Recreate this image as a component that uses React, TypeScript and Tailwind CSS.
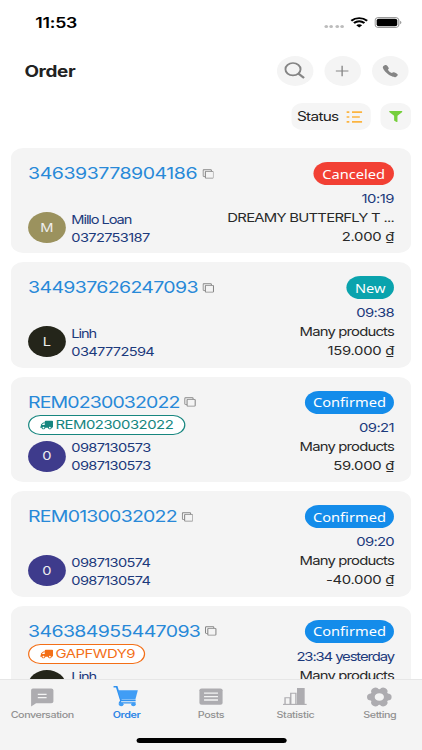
import type { ReactNode } from 'react'
import { FaFilter, FaTruck } from 'react-icons/fa'
import { IoCall } from 'react-icons/io5'

type Order = {
    id: string
    name: string
    phone: string
    initial: string
    avatar: string
    status: string
    statusClass: string
    time: string
    product: string
    price: string
    shipping?: string
    shippingClass?: string
    idClass: string
    timeClass: string
    productClass: string
}

const orders: Order[] = [
    {
        id: '346393778904186', name: 'Millo Loan', phone: '0372753187', initial: 'M', avatar: 'bg-[#9b925e]',
        status: 'Canceled', statusClass: 'bg-[#f24034] w-[66px]', time: '10:19', product: 'DREAMY BUTTERFLY T ...', price: '2.000 ₫',
        idClass: 'tracking-[-0.38px]', timeClass: 'tracking-[-0.4px]', productClass: 'tracking-[-0.62px]',
    },
    {
        id: '344937626247093', name: 'Linh', phone: '0347772594', initial: 'L', avatar: 'bg-[#24251a]',
        status: 'New', statusClass: 'bg-[#0aa3ad] w-[39px]', time: '09:38', product: 'Many products', price: '159.000 ₫',
        idClass: 'tracking-[-0.54px]', timeClass: 'tracking-[-0.6px]', productClass: 'tracking-[-0.68px]',
    },
    {
        id: 'REM0230032022', name: '0987130573', phone: '0987130573', initial: '0', avatar: 'bg-[#3e3b8c]',
        status: 'Confirmed', statusClass: 'bg-[#148cea] w-[73px]', time: '09:21', product: 'Many products', price: '59.000 ₫',
        shipping: 'REM0230032022', shippingClass: 'border-[#17867f] text-[#17867f] w-[129px]',
        idClass: 'tracking-[-0.72px]', timeClass: 'tracking-[-0.5px]', productClass: 'tracking-[-0.68px]',
    },
    {
        id: 'REM0130032022', name: '0987130574', phone: '0987130574', initial: '0', avatar: 'bg-[#3e3b8c]',
        status: 'Confirmed', statusClass: 'bg-[#148cea] w-[73px]', time: '09:20', product: 'Many products', price: '-40.000 ₫',
        idClass: 'tracking-[-0.64px]', timeClass: 'tracking-[-0.6px]', productClass: 'tracking-[-0.68px]',
    },
    {
        id: '346384955447093', name: 'Linh', phone: '0347772594', initial: 'L', avatar: 'bg-[#24251a]',
        status: 'Confirmed', statusClass: 'bg-[#148cea] w-[73px]', time: '23:34 yesterday', product: 'Many products', price: '159.000 ₫',
        shipping: 'GAPFWDY9', shippingClass: 'border-[#f36f17] text-[#f36f17] w-[96px]',
        idClass: 'tracking-[-0.52px]', timeClass: 'tracking-[-0.92px]', productClass: 'tracking-[-0.68px]',
    },
]

function CopyIcon() {
    return (
        <svg width="9.5" height="10" viewBox="0 0 10 10" fill="none" stroke="#858585" strokeWidth="0.9" className="-ml-[1px] shrink-0">
            <path d="M2.4 7.5H1.2A.7.7 0 0 1 .5 6.8V1.2A.7.7 0 0 1 1.2.5H7a.7.7 0 0 1 .7.7v.9" />
            <rect x="2.5" y="2.3" width="7" height="7.1" rx="0.7" />
        </svg>
    )
}

function OrderCard({ order }: { order: Order }) {
    return (
        <article className="flex h-[105.4px] shrink-0 justify-between rounded-[10px] bg-[#f4f4f4] px-[14px] pt-[14px]">
            <div className="flex flex-col">
                <div className="flex h-[23px] items-center gap-[5px]">
                    <h2 className={`text-[16px] leading-[23px] whitespace-nowrap text-[#2889d8] ${order.idClass}`}>{order.id}</h2>
                    <CopyIcon />
                </div>
                <div className="mt-[1.5px] h-[19px]">
                    {order.shipping && (
                        <div className={`flex h-[19.5px] items-center gap-[2px] rounded-full border bg-white pl-[9px] ${order.shippingClass}`}>
                            <FaTruck className="h-[10px] w-[10.5px] -scale-x-100" />
                            <span className="text-[12.2px] tracking-[-0.4px]">{order.shipping}</span>
                        </div>
                    )}
                </div>
                <div className="mt-[5px] flex h-[34px] items-center gap-[4.5px]">
                    <div className={`flex h-[31px] w-[31px] items-center justify-center rounded-full text-[12px] text-[#eeeeee] ${order.avatar}`}>
                        {order.initial}
                    </div>
                    <div className="pt-[2px] text-[12px] leading-[18px] text-[#1c3a7c]">
                        <p className={/^\d/.test(order.name) ? 'tracking-[-0.55px]' : 'tracking-[-0.9px]'}>{order.name}</p>
                        <p className="tracking-[-0.55px]">{order.phone}</p>
                    </div>
                </div>
            </div>
            <div className="flex flex-col items-end text-[12.2px] leading-[19px] whitespace-nowrap text-[#292929]">
                <span className={`mb-[4px] flex h-[23px] shrink-0 items-center justify-center rounded-full pt-px font-['Noto_Sans'] text-[12px] text-white ${order.statusClass}`}>
                    {order.status}
                </span>
                <span className={`text-[#1c3a7c] ${order.timeClass}`}>{order.time}</span>
                <span className={order.productClass}>{order.product}</span>
                <span className="tracking-[-0.25px]">{order.price}</span>
            </div>
        </article>
    )
}

function RoundButton({ children }: { children: ReactNode }) {
    return (
        <button className="flex h-[30px] w-[30px] items-center justify-center rounded-full bg-[#f4f4f4] text-[#858585]">
            {children}
        </button>
    )
}

function StatusBar() {
    return (
        <div className="flex h-[44px] items-center justify-between pr-[16px] pl-[29px] text-black">
            <span className="mt-[1px] text-[14.5px] font-semibold tracking-[-0.2px]">11:53</span>
            <div className="flex items-center gap-[5px]">
                <div className="mt-[8px] flex gap-[1.4px]">
                    {[0, 1, 2, 3].map((i) => (
                        <span key={i} className="h-[3px] w-[3px] rounded-full bg-[#bcbcbc]" />
                    ))}
                </div>
                <svg width="15" height="11" viewBox="0 0 15 11">
                    <path d="M1 3.7C4.8.3 10.2.3 14 3.7M3.2 6.1c2.6-2.2 6-2.2 8.6 0" fill="none" stroke="#000" strokeWidth="1.9" />
                    <path d="M7.5 10.6 5.1 8.2c1.3-1.2 3.5-1.2 4.8 0z" />
                </svg>
                <svg width="23" height="11" viewBox="0 0 23 11">
                    <rect x="0.5" y="0.5" width="19.5" height="10" rx="3" fill="none" stroke="#9a9a9a" />
                    <rect x="1.8" y="1.8" width="16.9" height="7.4" rx="1.7" />
                    <path d="M21 3.8c1.5.5 1.5 2.9 0 3.4z" fill="#9a9a9a" />
                </svg>
            </div>
        </div>
    )
}

const tabs: { label: string; active?: boolean; icon: ReactNode }[] = [
    {
        label: 'Conversation',
        icon: (
            <>
                <path d="M2 .5h15A1.8 1.8 0 0 1 18.8 2.3v11.2a1.8 1.8 0 0 1-1.8 1.8H4.6L.5 18.5V2.3A1.8 1.8 0 0 1 2 .5z" fill="#adacb0" />
                <path d="M6 6.4h7.2M6 9.6h7.2" stroke="#f4f4f4" strokeWidth="1.3" />
            </>
        ),
    },
    {
        label: 'Order',
        active: true,
        icon: (
            <>
                <path d="M-.9-1.2h2.6L5.2 12.4h12" fill="none" stroke="#2f91ef" strokeWidth="1.5" />
                <path d="M2.6 2.2H19l-2 9.4H5z" fill="#409df5" />
                <path d="M5.2 12.3 4 14.8h13.2" fill="none" stroke="#2f91ef" strokeWidth="1.2" />
                <circle cx="5.4" cy="16.3" r="1.9" fill="#409df5" />
                <circle cx="15.4" cy="16.3" r="1.9" fill="#409df5" />
            </>
        ),
    },
    {
        label: 'Posts',
        icon: (
            <>
                <rect x="0.5" y="0.5" width="19" height="16.3" rx="1.8" fill="#adacb0" />
                <path d="M4.3 5.2h11.4M4.3 8.6h11.4M4.3 12h11.4" stroke="#f4f4f4" strokeWidth="1.3" />
            </>
        ),
    },
    {
        label: 'Statistic',
        icon: (
            <>
                <path d="M1.7 16.3V9.7h4.2v6.6M6.4 16.3V5.3h4.2v11" fill="none" stroke="#adacb0" strokeWidth="1.1" />
                <path d="M11.5 0h6.3v16.4h-6.3z" fill="#adacb0" />
                <path d="M0 16.4h19.4" stroke="#adacb0" strokeWidth="1.1" />
            </>
        ),
    },
    {
        label: 'Setting',
        icon: (
            <>
                {[0, 60, 120, 180, 240, 300].map((a) => (
                    <circle key={a} cx="16.6" cy="9" r="3.5" fill="#adacb0" transform={`rotate(${a} 10 9)`} />
                ))}
                <circle cx="10" cy="9" r="7.8" fill="#adacb0" />
                <circle cx="10" cy="9" r="3.8" fill="#f4f4f4" />
            </>
        ),
    },
]

export default function App() {
    return (
        <div className="h-[750px] w-[422px] overflow-hidden bg-white">
            {/* the 346pt wide phone layout fills the wider viewport */}
            <div className="flex h-[750px] w-[346px] origin-left scale-x-[1.2197] flex-col overflow-hidden bg-white font-['Inter','Liberation_Sans',sans-serif]">
                <StatusBar />
                <header className="flex h-[53px] shrink-0 items-center justify-between pr-[11px] pl-[20px]">
                    <h1 className="mt-[2px] text-[15.5px] font-bold tracking-[-0.3px] text-[#222222]">Order</h1>
                    <div className="flex gap-[9px]">
                        <RoundButton>
                            <svg width="17" height="17" viewBox="0 0 17 17" fill="none" stroke="currentColor" strokeWidth="1.6" className="mr-px">
                                <circle cx="7.2" cy="7.2" r="6.2" />
                                <path d="m11.6 11.6 4.7 4.3" strokeWidth="2" />
                            </svg>
                        </RoundButton>
                        <RoundButton>
                            <svg width="11" height="12" viewBox="0 0 12 12" stroke="currentColor" strokeWidth="1.2" className="mr-px">
                                <path d="M6 .3v11.4M.3 6h11.4" />
                            </svg>
                        </RoundButton>
                        <RoundButton>
                            <IoCall className="h-[14px] w-[14px]" />
                        </RoundButton>
                    </div>
                </header>
                <div className="flex h-[51px] shrink-0 justify-end gap-[8px] pt-[6px] pr-[9px]">
                    <button className="flex h-[27px] w-[65px] items-center justify-between rounded-[9px] bg-[#f5f5f5] pr-[7px] pl-[4.5px] text-[12.6px] text-[#222222]">
                        <span className="pt-px tracking-[-0.6px]">Status</span>
                        <svg width="13" height="12" viewBox="0 0 13 12" fill="none" stroke="#fbb440" strokeWidth="1.7">
                            <path d="M0 1.2h2.4M0 6h2.4M0 10.8h2.4M4.6 1.2H13M4.6 6h6.4M4.6 10.8H13" />
                        </svg>
                    </button>
                    <button className="flex h-[27px] w-[25px] items-center justify-center rounded-[9px] bg-[#f5f5f5] text-[#76cf3c]">
                        <FaFilter className="h-[11px] w-[11px]" />
                    </button>
                </div>
                <main className="flex min-h-0 flex-1 flex-col gap-[9px] overflow-hidden px-[9px]">
                    {orders.map((order) => (
                        <OrderCard key={order.id} order={order} />
                    ))}
                </main>
                <footer className="flex h-[71px] shrink-0 flex-col items-center border-t border-[#e6e6e6] bg-[#f4f4f4]">
                    <nav className="grid w-full grid-cols-5 pt-[8px]">
                        {tabs.map((tab) => (
                            <div key={tab.label} className="flex flex-col items-center">
                                <svg width="20" height="19" viewBox="0 0 20 19" className="overflow-visible">{tab.icon}</svg>
                                <span className={tab.active ? 'mt-[2px] text-[8.8px] leading-[12px] font-semibold tracking-[-0.3px] text-[#2f86e6]' : 'mt-[2px] text-[8.8px] leading-[12px] font-medium tracking-[-0.35px] text-[#919191]'}>
                                    {tab.label}
                                </span>
                            </div>
                        ))}
                    </nav>
                    <div className="mt-[17px] h-[5px] w-[123px] rounded-full bg-black" />
                </footer>
            </div>
        </div>
    )
}
